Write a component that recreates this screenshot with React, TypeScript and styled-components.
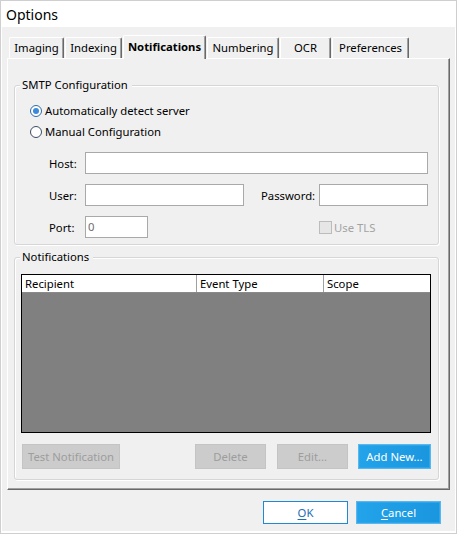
import React from "react";
import styled, { createGlobalStyle } from "styled-components";

const FONT = `"Noto Sans", "Open Sans", Arial, sans-serif`;
const FS = "11.3px";

const GlobalStyle = createGlobalStyle`
  html, body { margin: 0; padding: 0; background: #fff; }
  body { font-family: ${FONT}; font-size: ${FS}; color: #000; }
  *, *::before, *::after { box-sizing: border-box; }
`;

const Window = styled.div`
  width: 457px;
  height: 534px;
  border: 1px solid #cfcfcf;
  background: #f0f0f0;
  box-shadow: inset 0 -2px 0 #fff, inset 1px 0 0 #fff, inset -1px 0 0 #fff;
  display: flex;
  flex-direction: column;
`;

const TitleBar = styled.div`
  height: 26px;
  flex: none;
  background: #fff;
  padding-left: 5px;
  font-size: 14px;
  line-height: 27px;
  color: #000;
`;

const Body = styled.div`
  flex: 1;
  display: flex;
  flex-direction: column;
  padding: 8px 6px 0 6px;
`;

const TabStrip = styled.div`
  display: flex;
  align-items: flex-end;
  gap: 1px;
  height: 23px;
  padding-left: 2px;
  position: relative;
  z-index: 1;
`;

const Tab = styled.div<{ $w: number; $active?: boolean }>`
  width: ${(p) => p.$w}px;
  height: ${(p) => (p.$active ? 24 : 21)}px;
  margin-bottom: ${(p) => (p.$active ? -1 : 0)}px;
  border-top: 1px solid #fff;
  border-left: 1px solid #fff;
  border-right: 1px solid #696969;
  box-shadow: inset -1px 0 0 #a0a0a0;
  border-radius: 2px 2px 0 0;
  background: #f0f0f0;
  display: flex;
  align-items: center;
  justify-content: center;
  padding-bottom: ${(p) => (p.$active ? 3 : 1)}px;
  font-weight: ${(p) => (p.$active ? 700 : 400)};
  font-size: ${FS};
  white-space: nowrap;
`;

const Panel = styled.div`
  border-top: 1px solid #fff;
  border-left: 1px solid #fff;
  border-right: 1px solid #696969;
  border-bottom: 1px solid #696969;
  box-shadow: inset -1px -1px 0 #a0a0a0;
  padding: 18px 10px 9px 6px;
  display: flex;
  flex-direction: column;
`;

const Group = styled.fieldset<{ $gap?: number }>`
  margin: ${(p) => p.$gap ?? 0}px 0 0 0;
  padding: 0;
  min-width: 0;
  border: 1px solid #d6d6d6;
  border-radius: 3px;
  box-shadow: inset 1px 1px 0 #fff, 1px 1px 0 #fff;
`;

const Legend = styled.legend`
  margin-left: 5px;
  padding: 0 4px 0 2px;
  font-size: ${FS};
  line-height: 16px;
  height: 16px;
  background: #f0f0f0;
`;

const SmtpBody = styled.div`
  padding: 7px 9px 6px 15px;
  display: flex;
  flex-direction: column;
`;

const RadioRow = styled.label`
  display: flex;
  align-items: center;
  gap: 3px;
  height: 21px;
`;

const Radio = styled.span<{ $checked?: boolean }>`
  flex: none;
  width: 12px;
  height: 12px;
  border-radius: 50%;
  border: 1px solid ${(p) => (p.$checked ? "#2f6aa8" : "#3b4d63")};
  background: #fff;
  position: relative;
  &::after {
    content: "";
    position: absolute;
    inset: 2px;
    border-radius: 50%;
    background: #3d89d9;
    display: ${(p) => (p.$checked ? "block" : "none")};
  }
`;

const FieldGrid = styled.div`
  margin: 10px 0 0 19px;
  display: grid;
  grid-template-columns: 36px 159px 17px 58px 109px;
  grid-auto-rows: 22px;
  row-gap: 10px;
  align-items: center;
`;

const FieldLabel = styled.span<{ $col: number }>`
  grid-column: ${(p) => p.$col};
  white-space: nowrap;
`;

const Input = styled.div<{ $col: string; $w?: number; $muted?: boolean }>`
  grid-column: ${(p) => p.$col};
  width: ${(p) => (p.$w ? `${p.$w}px` : "auto")};
  height: 22px;
  background: #fff;
  border: 1px solid #a9a9a9;
  padding-left: 2px;
  line-height: 20px;
  color: ${(p) => (p.$muted ? "#6d6d6d" : "#000")};
`;

const CheckRow = styled.div<{ $col: number }>`
  grid-column: ${(p) => p.$col};
  display: flex;
  align-items: center;
  gap: 2px;
  color: #a3a3a3;
  padding-top: 1px;
`;

const CheckBox = styled.span`
  width: 13px;
  height: 13px;
  background: #e6e6e6;
  border: 1px solid #bcbcbc;
  flex: none;
`;

const NotifBody = styled.div`
  padding: 9px 7px 10px 6px;
  display: flex;
  flex-direction: column;
`;

const List = styled.div`
  height: 159px;
  border: 1px solid #000;
  background: #808080;
  display: flex;
  flex-direction: column;
`;

const ListHeader = styled.div`
  display: grid;
  grid-template-columns: 175px 127px 1fr;
  height: 18px;
  background: #fff;
  border-bottom: 1px solid #8a8a8a;
`;

const HeaderCell = styled.div<{ $last?: boolean }>`
  padding-left: 3px;
  line-height: 17px;
  border-right: ${(p) => (p.$last ? "none" : "1px solid #a0a0a0")};
  white-space: nowrap;
`;

const ButtonRow = styled.div`
  margin-top: 11px;
  display: flex;
  align-items: center;
  padding-left: 1px;
`;

const Spacer = styled.div`
  flex: 1;
`;

const Button = styled.div<{ $w: number; $variant: "disabled" | "primary" | "outline"; $h?: number; $ml?: number }>`
  width: ${(p) => p.$w}px;
  height: ${(p) => p.$h ?? 25}px;
  margin-left: ${(p) => p.$ml ?? 0}px;
  flex: none;
  display: flex;
  align-items: center;
  justify-content: center;
  font-size: ${FS};
  padding-bottom: 1px;
  border: 1px solid
    ${(p) => (p.$variant === "disabled" ? "#c4c4c4" : p.$variant === "primary" ? "#5bb6ec" : "#1f8ad3")};
  background: ${(p) =>
    p.$variant === "disabled"
      ? "#cccccc"
      : p.$variant === "primary"
      ? "linear-gradient(90deg, #22a3ea 0%, #1a96df 100%)"
      : "#fff"};
  color: ${(p) => (p.$variant === "disabled" ? "#9d9d9d" : p.$variant === "primary" ? "#fff" : "#1b6db5")};
  box-shadow: ${(p) => (p.$variant === "primary" ? "inset 0 0 0 1px #2aa6ec" : "none")};
  u {
    text-decoration: underline;
    text-underline-offset: 2px;
  }
`;

const Footer = styled.div`
  display: flex;
  justify-content: flex-end;
  gap: 8px;
  padding: 11px 9px 0 0;
`;

const tabs = [
  { label: "Imaging", w: 55 },
  { label: "Indexing", w: 57 },
  { label: "Notifications", w: 83, active: true },
  { label: "Numbering", w: 72 },
  { label: "OCR", w: 51 },
  { label: "Preferences", w: 77 },
];

export default function App() {
  return (
    <>
      <GlobalStyle />
      <Window>
        <TitleBar>Options</TitleBar>
        <Body>
          <TabStrip>
            {tabs.map((t) => (
              <Tab key={t.label} $w={t.w} $active={t.active}>
                {t.label}
              </Tab>
            ))}
          </TabStrip>
          <Panel>
            <Group>
              <Legend>SMTP Configuration</Legend>
              <SmtpBody>
                <RadioRow>
                  <Radio $checked />
                  Automatically detect server
                </RadioRow>
                <RadioRow>
                  <Radio />
                  Manual Configuration
                </RadioRow>
                <FieldGrid>
                  <FieldLabel $col={1}>Host:</FieldLabel>
                  <Input $col="2 / span 4" />
                  <FieldLabel $col={1}>User:</FieldLabel>
                  <Input $col="2" />
                  <FieldLabel $col={4}>Password:</FieldLabel>
                  <Input $col="5" />
                  <FieldLabel $col={1}>Port:</FieldLabel>
                  <Input $col="2" $w={63} $muted>
                    0
                  </Input>
                  <CheckRow $col={5}>
                    <CheckBox />
                    Use TLS
                  </CheckRow>
                </FieldGrid>
              </SmtpBody>
            </Group>
            <Group $gap={4}>
              <Legend>Notifications</Legend>
              <NotifBody>
                <List>
                  <ListHeader>
                    <HeaderCell>Recipient</HeaderCell>
                    <HeaderCell>Event Type</HeaderCell>
                    <HeaderCell $last>Scope</HeaderCell>
                  </ListHeader>
                </List>
                <ButtonRow>
                  <Button $w={98} $variant="disabled">
                    Test Notification
                  </Button>
                  <Spacer />
                  <Button $w={71} $variant="disabled">
                    Delete
                  </Button>
                  <Button $w={71} $variant="disabled" $ml={11}>
                    Edit...
                  </Button>
                  <Button $w={73} $variant="primary" $ml={10}>
                    Add New...
                  </Button>
                </ButtonRow>
              </NotifBody>
            </Group>
          </Panel>
          <Footer>
            <Button $w={85} $h={23} $variant="outline">
              <span>
                <u>O</u>K
              </span>
            </Button>
            <Button $w={85} $h={23} $variant="primary">
              <span>
                <u>C</u>ancel
              </span>
            </Button>
          </Footer>
        </Body>
      </Window>
    </>
  );
}
